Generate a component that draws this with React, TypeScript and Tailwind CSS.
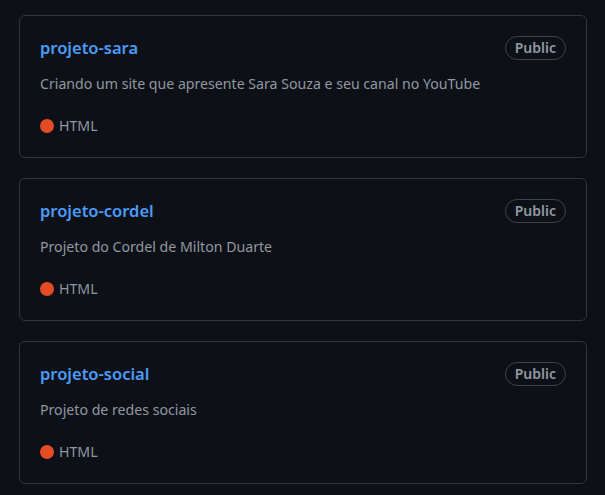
const repos = [
  { name: 'projeto-sara', description: 'Criando um site que apresente Sara Souza e seu canal no YouTube' },
  { name: 'projeto-cordel', description: 'Projeto do Cordel de Milton Duarte' },
  { name: 'projeto-social', description: 'Projeto de redes sociais' },
]

function RepoCard({ name, description }: { name: string; description: string }) {
  return (
    <div className="rounded-md border border-[#30363d] bg-[#0d1117] px-5 pt-5 pb-[21px]">
      <div className="flex items-center justify-between h-6">
        <a className="text-[16.5px] font-semibold text-[#4c9bf8] leading-6">{name}</a>
        <span className="rounded-full border border-[#3d444d] px-[9px] h-[24px] flex items-center text-[14px] font-semibold text-[#9198a1] leading-none">
          Public
        </span>
      </div>
      <p className="mt-[13px] text-[14.15px] leading-[21px] text-[#9198a1]">{description}</p>
      <div className="mt-[21px] flex items-center gap-[5px] text-[14.15px] leading-[21px] text-[#9198a1]">
        <span className="inline-block w-[14px] h-[14px] rounded-full bg-[#e34c26]" />
        <span>HTML</span>
      </div>
    </div>
  )
}

export default function App() {
  return (
    <div
      className="min-h-screen bg-[#0d1117] pl-[19px] pr-[18px] pt-[15px]"
      style={{ fontFamily: '"Noto Sans", "Open Sans", sans-serif' }}
    >
      <div className="flex flex-col gap-5">
        {repos.map(r => (
          <RepoCard key={r.name} {...r} />
        ))}
      </div>
    </div>
  )
}
